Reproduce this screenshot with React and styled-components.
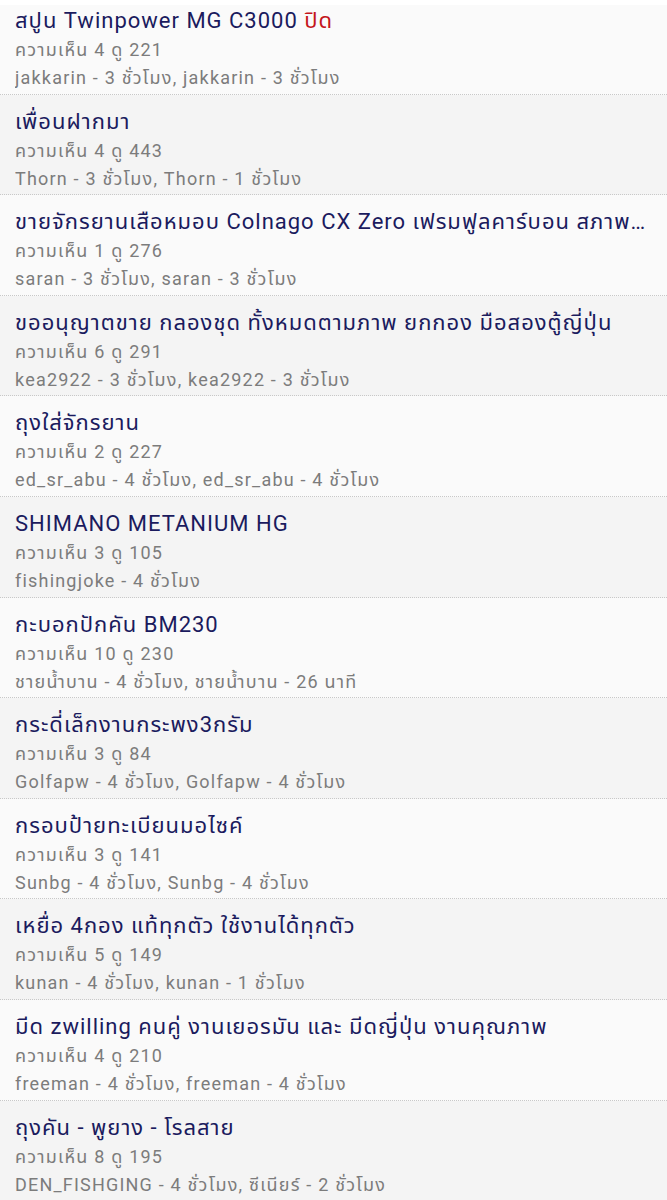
import React from "react";
import styled, { createGlobalStyle } from "styled-components";

const GlobalStyle = createGlobalStyle`
  html, body {
    margin: 0;
    padding: 0;
    background: #fff;
  }
  body {
    font-family: Roboto, "Noto Sans", "Noto Sans Thai", "DejaVu Sans", sans-serif;
  }
`;

const List = styled.ul`
  list-style: none;
  margin: 0;
  padding: 5px 0 0;
`;

const Row = styled.li`
  padding: 12px 8px 1.6px 15px;
  background: ${({ $shade }) => ($shade ? "#f4f4f4" : "#fafafa")};
  border-bottom: 1px dotted #c8c8c8;

  &:first-child {
    padding-top: 1px;
  }
`;

const Title = styled.div`
  font-size: 22px;
  line-height: 30px;
  letter-spacing: 1px;
  color: #1b1b5e;
  white-space: nowrap;
  overflow: hidden;
  text-overflow: ellipsis;
`;

const Closed = styled.span`
  color: #c4161c;
`;

const Meta = styled.div`
  font-size: 18px;
  line-height: 28px;
  letter-spacing: 1.2px;
  color: #7c7c7c;
  white-space: nowrap;
  overflow: hidden;
`;

const topics = [
  {
    title: "สปูน Twinpower MG C3000",
    closed: true,
    comments: 4,
    views: 221,
    who: "jakkarin - 3 ชั่วโมง, jakkarin - 3 ชั่วโมง",
  },
  { title: "เพื่อนฝากมา", comments: 4, views: 443, who: "Thorn - 3 ชั่วโมง, Thorn - 1 ชั่วโมง" },
  {
    title: "ขายจักรยานเสือหมอบ Colnago CX Zero เฟรมฟูลคาร์บอน สภาพดีมาก พร้อมใช้งาน",
    comments: 1,
    views: 276,
    who: "saran - 3 ชั่วโมง, saran - 3 ชั่วโมง",
  },
  {
    title: "ขออนุญาตขาย กลองชุด ทั้งหมดตามภาพ ยกกอง มือสองตู้ญี่ปุ่น",
    comments: 6,
    views: 291,
    who: "kea2922 - 3 ชั่วโมง, kea2922 - 3 ชั่วโมง",
  },
  {
    title: "ถุงใส่จักรยาน",
    comments: 2,
    views: 227,
    who: "ed_sr_abu - 4 ชั่วโมง, ed_sr_abu - 4 ชั่วโมง",
  },
  { title: "SHIMANO METANIUM HG", comments: 3, views: 105, who: "fishingjoke - 4 ชั่วโมง" },
  {
    title: "กะบอกปักคัน BM230",
    comments: 10,
    views: 230,
    who: "ชายน้ำบาน - 4 ชั่วโมง, ชายน้ำบาน - 26 นาที",
  },
  {
    title: "กระดี่เล็กงานกระพง3กรัม",
    comments: 3,
    views: 84,
    who: "Golfapw - 4 ชั่วโมง, Golfapw - 4 ชั่วโมง",
  },
  {
    title: "กรอบป้ายทะเบียนมอไซค์",
    comments: 3,
    views: 141,
    who: "Sunbg - 4 ชั่วโมง, Sunbg - 4 ชั่วโมง",
  },
  {
    title: "เหยื่อ 4กอง แท้ทุกตัว ใช้งานได้ทุกตัว",
    comments: 5,
    views: 149,
    who: "kunan - 4 ชั่วโมง, kunan - 1 ชั่วโมง",
  },
  {
    title: "มีด zwilling คนคู่ งานเยอรมัน และ มีดญี่ปุ่น งานคุณภาพ",
    comments: 4,
    views: 210,
    who: "freeman - 4 ชั่วโมง, freeman - 4 ชั่วโมง",
  },
  {
    title: "ถุงคัน - พูยาง - โรลสาย",
    comments: 8,
    views: 195,
    who: "DEN_FISHGING - 4 ชั่วโมง, ซีเนียร์ - 2 ชั่วโมง",
  },
];

export default function App() {
  return (
    <>
      <GlobalStyle />
      <List>
        {topics.map((t, i) => (
          <Row key={i} $shade={i % 2 === 1}>
            <Title>
              {t.title}
              {t.closed && <Closed> ปิด</Closed>}
            </Title>
            <Meta>
              ความเห็น {t.comments} ดู {t.views}
            </Meta>
            <Meta>{t.who}</Meta>
          </Row>
        ))}
      </List>
    </>
  );
}
